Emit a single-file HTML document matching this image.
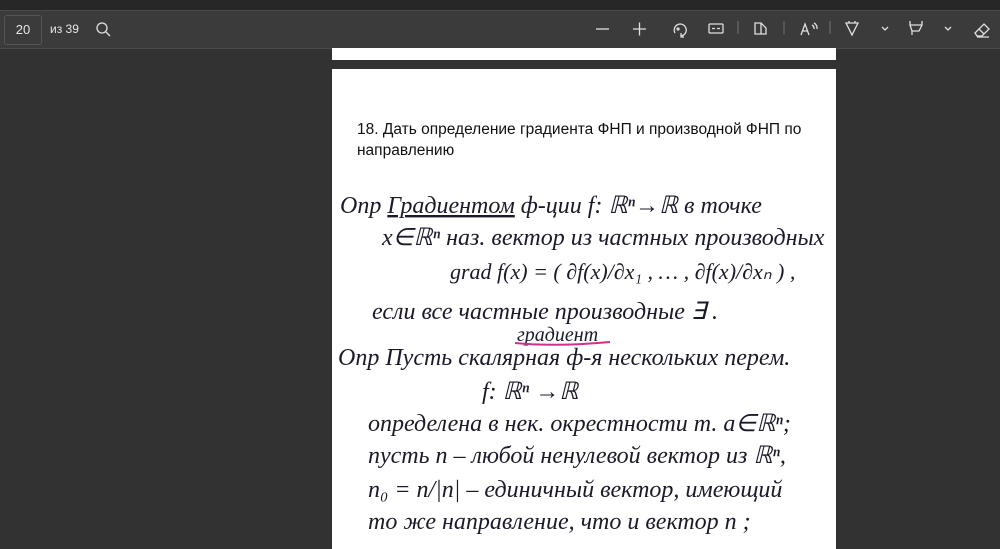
<!DOCTYPE html>
<html><head><meta charset="utf-8"><style>
body{margin:0;width:1000px;height:538px;background:#323232;overflow:hidden;position:relative;font-family:"Liberation Sans",sans-serif}
.top{position:absolute;left:0;top:0;width:1000px;height:10px;background:#272727}
.tb{position:absolute;left:0;top:10px;width:1000px;height:37px;background:#3b3b3b;border-top:1px solid #4a4a4a;border-bottom:1px solid #4a4a4a;color:#e6e6e6}
.pg{position:absolute;left:4px;top:4px;width:36px;height:28px;border:1px solid #555;border-radius:3px;font-size:13px;line-height:28px;text-align:center}
.of{position:absolute;left:50px;top:11px;font-size:12px}
.p1{position:absolute;left:332px;top:48px;width:504px;height:12px;background:#fff}
.p2{position:absolute;left:332px;top:69px;width:504px;height:480px;background:#fff}
.h{position:absolute;left:357px;top:119px;font-size:15.5px;line-height:21px;color:#111;width:460px}
svg.hw{position:absolute;left:332px;top:69px}
</style></head><body>
<div class="top"></div>
<div class="tb">
<div class="pg">20</div><div class="of">из 39</div>
<svg style="position:absolute;left:0;top:0" width="1000" height="37" fill="none" stroke="#e0e0e0" stroke-width="1.3">
<circle cx="102" cy="17" r="5"/><path d="M106 21l4 4"/>
<path d="M596 18h13"/><path d="M633 18h13M639.5 11.5v13"/>
<path d="M675 22a6 6 0 1 1 6 3M681 22v4h3"/><circle cx="678" cy="18" r="1"/>
<rect x="709" y="13" width="14" height="9" rx="1"/><path d="M712 17.5h3M717 17.5h3"/>
<path d="M738 10v13" stroke="#666"/>
<path d="M755 12h6l5 5v6h-11zM761 12v11"/>
<path d="M784 10v13" stroke="#666"/>
<path d="M801 24l4-11 4 11M802.5 20h5M812 14a4 4 0 0 1 2 4M814 12a6 6 0 0 1 3 6"/>
<path d="M830 10v13" stroke="#666"/>
<path d="M846 12h12l-6 12zM849 12v-2M855 12v-2"/>
<path d="M882 16l3 3 3-3"/>
<path d="M910 10v4h12v-4M910 14l2 6h7l3-6M912 20v4"/>
<path d="M945 16l3 3 3-3"/>
<path d="M975 22l9-9 5 5-7 7h-5zM979 18l5 5M977 26h12"/>
</svg>
</div>
<div class="p1"></div>
<div class="p2"></div>
<div class="h">18. Дать определение градиента ФНП и производной ФНП по направлению</div>
<svg class="hw" width="504" height="470" font-family="'Liberation Serif',serif" font-style="italic" fill="#1a1a2a" font-size="24">
<text x="8" y="144">Опр <tspan text-decoration="underline">Градиентом</tspan> ф-ции  f: ℝⁿ→ℝ в точке</text>
<text x="50" y="176">x∈ℝⁿ  наз. вектор из частных производных</text>
<text x="118" y="210" font-size="22">grad f(x) = ( ∂f(x)/∂x₁ , … , ∂f(x)/∂xₙ ) ,</text>
<text x="40" y="250">если все частные производные ∃ .</text>
<text x="185" y="272" font-size="20">градиент</text>
<path d="M183 274q40 4 95 -1" stroke="#d0308a" stroke-width="2" fill="none"/>
<text x="6" y="296">Опр Пусть скалярная ф-я нескольких перем.</text>
<text x="150" y="330">f: ℝⁿ →ℝ</text>
<text x="36" y="362">определена в нек. окрестности т. a∈ℝⁿ;</text>
<text x="36" y="394">пусть n – любой ненулевой вектор из ℝⁿ,</text>
<text x="36" y="428">n₀ = n/|n| – единичный вектор, имеющий</text>
<text x="36" y="460">то же направление, что и вектор n ;</text>
</svg>
</body></html>
